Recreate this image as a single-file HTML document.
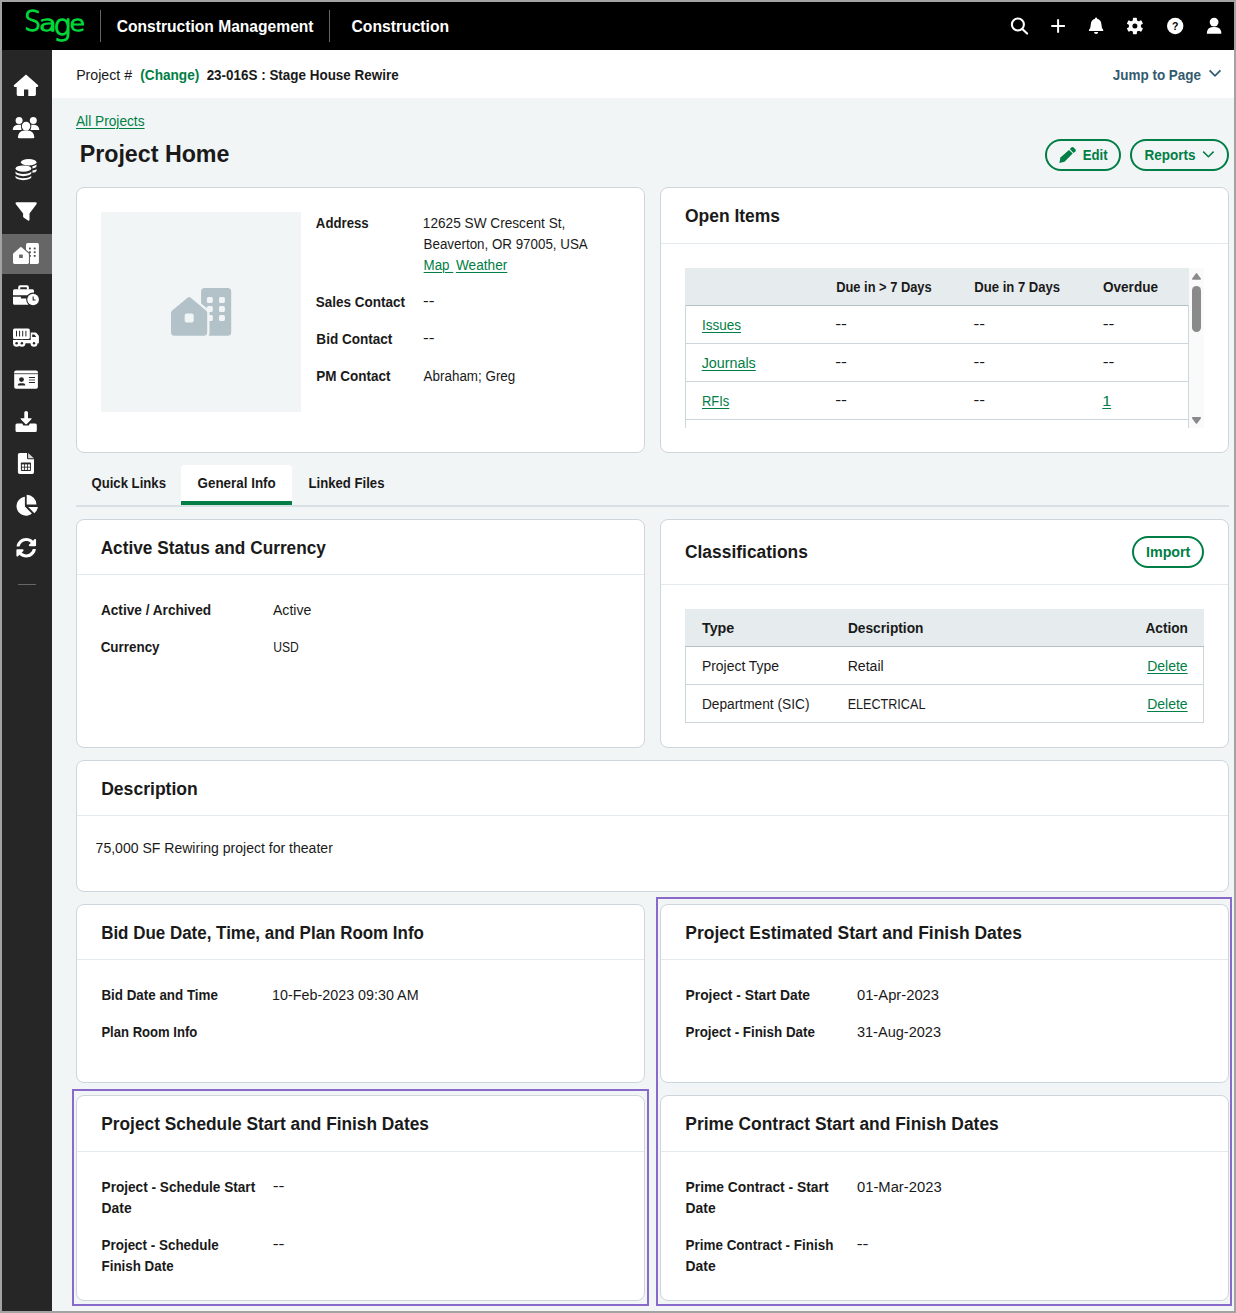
<!DOCTYPE html>
<html lang="en">
<head>
<meta charset="utf-8">
<title>Project Home</title>
<style>
*{box-sizing:border-box;margin:0;padding:0}
html,body{width:1236px;height:1313px;overflow:hidden;background:#f2f5f6}
body{font-family:"Liberation Sans",sans-serif;font-size:14px;line-height:20px;color:#1a1a1a;position:relative}
.a{position:absolute}
#hdr{left:0;top:0;width:1236px;height:50px;background:#000}
#side{left:0;top:50px;width:52px;height:1263px;background:#262626}
#sub{left:52px;top:50px;width:1184px;height:48px;background:#fff}
#frame{left:0;top:0;width:1236px;height:1313px;border:2px solid #a3a3a3;z-index:50}
.t{position:absolute;white-space:nowrap;transform-origin:0 50%;line-height:20px;height:20px}
.r{transform-origin:100% 50%}
.b{font-weight:700}
.g{color:#007e45}
.s{color:#335b70}
.u{text-decoration:underline;text-underline-offset:2px;text-decoration-thickness:1px}
.h1{font-size:23px;font-weight:700}
.h2{font-size:18px;font-weight:700}
.hd{font-size:16px;font-weight:700;color:#fff}
.card{position:absolute;background:#fff;border:1px solid #ccd6db;border-radius:8px}
.hr{position:absolute;height:1px;background:#e3e9ec}
.th{position:absolute;background:#e6ebed}
.ln{position:absolute;background:#ccd6db}
.pill{position:absolute;border:2px solid #007e45;border-radius:16px;height:32px}
.pur{position:absolute;border:2px solid #8969ca}
svg{position:absolute;display:block;overflow:visible}
</style>
</head>
<body>
<div id="hdr" class="a"></div>
<div id="side" class="a"></div>
<div id="sub" class="a"></div>
<div class="a" style="left:100px;top:10px;width:1px;height:32px;background:#666"></div>
<div class="a" style="left:329px;top:10px;width:1px;height:32px;background:#666"></div>
<div class="a" style="left:0;top:234px;width:52px;height:40px;background:#666"></div>
<div class="a" style="left:18px;top:584px;width:18px;height:1px;background:#666"></div>
<svg style="left:0;top:0" width="100" height="50" viewBox="0 0 100 50"><title>Sage</title><text font-family="DejaVu Sans Light, DejaVu Sans" font-weight="200" fill="#00d639" stroke="#00d639" stroke-width="1.4" stroke-linejoin="round"><tspan x="24.20" y="31.05" font-size="27.61" textLength="16.67" lengthAdjust="spacingAndGlyphs">S</tspan><tspan x="39.10" y="31.30" font-size="21.28" textLength="17.67" lengthAdjust="spacingAndGlyphs">a</tspan><tspan x="53.55" y="35.35" font-size="28.47" textLength="17.57" lengthAdjust="spacingAndGlyphs">g</tspan><tspan x="69.55" y="31.30" font-size="21.28" textLength="15.64" lengthAdjust="spacingAndGlyphs">e</tspan></text></svg>
<svg style="left:0;top:50px" width="52" height="560" viewBox="0 50 52 560" fill="#fff">
<!-- home -->
<path d="M26 74.4 L38.2 85.2 Q38.6 86.6 37 87 H35.9 V94.6 Q35.9 96 34.5 96 H28.3 V89.6 H24 V96 H18.1 Q16.7 96 16.7 94.6 V87 H15 Q13.4 86.6 13.8 85.2 Z"/>
<!-- users -->
<circle cx="19.1" cy="120.4" r="3.5"/><circle cx="33.3" cy="120.4" r="3.5"/>
<path d="M12.7 130 Q13 125 18 124.8 H21.5 L21.5 130 Z"/><path d="M39.3 130 Q39 125 34 124.8 H30.5 L30.5 130 Z"/>
<circle cx="26.1" cy="126.1" r="5.3" fill="#262626"/><circle cx="26.1" cy="126.1" r="4.3"/>
<path d="M17.9 137 Q18.5 130.8 24.5 130.6 H27.7 Q33.7 130.8 34.3 137 Q34.3 138.3 33 138.3 H19.2 Q17.9 138.3 17.9 137 Z"/>
<!-- coins -->
<ellipse cx="28.7" cy="162.3" rx="7.8" ry="3.2"/>
<path d="M32.4 166.2 Q35.5 165.8 36.5 164.6 V166.6 Q36 168 32.4 168.4 Z"/>
<path d="M32.4 170.6 Q35.5 170.2 36.5 169 V171 Q36 172.4 32.4 172.8 Z"/>
<ellipse cx="23.4" cy="168.6" rx="7.9" ry="3.2"/>
<path d="M15.5 171.6 Q17 174 23.4 174 Q29.8 174 31.3 171.6 V173.6 Q30 176 23.4 176.2 Q16.800 176 15.5 173.6 Z"/>
<path d="M15.5 175.8 Q17 178.200 23.4 178.200 Q29.8 178.200 31.3 175.8 V177.600 Q30 180 23.4 180.2 Q16.800 180 15.5 177.600 Z"/>
<!-- filter -->
<path d="M16.6 202.3 H35.700 Q37.400 202.500 36.600 204 L29.5 213.400 V219.700 Q29.300 221.100 28 220.500 L23.600 217.600 Q23.100 217.200 23.100 216.500 V213.400 L15.700 204 Q14.900 202.500 16.600 202.300 Z"/>
<!-- building/house (active) -->
<rect x="26" y="243.1" width="12.9" height="20.800" rx="1.6"/>
<g fill="#484848"><rect x="29" y="247.600" width="1.800" height="1.800"/><rect x="33.800" y="247.600" width="1.800" height="1.800"/><rect x="29" y="251.300" width="1.800" height="1.800"/><rect x="33.800" y="251.300" width="1.800" height="1.800"/><rect x="29" y="255" width="1.800" height="1.800"/><rect x="33.800" y="255" width="1.800" height="1.800"/></g>
<path d="M20.900 245.600 L30 253 V264.900 H13 V253 Z" fill="#666"/>
<path d="M20.900 246.800 L28.400 253.200 Q28.900 253.700 28.900 254.400 V262.500 Q28.900 263.900 27.500 263.900 H14.400 Q13 263.900 13 262.500 V254.400 Q13 253.700 13.500 253.200 Z"/>
<rect x="19.100" y="254.400" width="3.700" height="3.500" rx=".5" fill="#666"/>
<!-- briefcase clock -->
<path d="M18.200 289.500 V287.200 Q18.200 285.200 20.200 285.200 H26.900 Q28.900 285.200 28.900 287.200 V289.500 H26.900 V287.800 Q26.900 287.300 26.400 287.300 H20.700 Q20.200 287.300 20.200 287.800 V289.500 Z"/>
<path d="M14.500 289.200 H32.500 Q34 289.200 34 290.700 V295.300 H13 V290.700 Q13 289.200 14.500 289.200 Z"/>
<path d="M13 296.800 H20.900 V298.600 H27 V296.800 H30 V304.700 H14.500 Q13 304.700 13 303.200 Z"/>
<circle cx="33.100" cy="299.500" r="6.900" fill="#262626"/><circle cx="33.100" cy="299.500" r="5.800"/>
<path d="M32.600 296.500 H33.700 V299.500 H35.600 V300.600 H32.600 Z" fill="#262626"/>
<!-- truck -->
<rect x="13" y="328.400" width="16.800" height="10.600" rx="1.600"/>
<g fill="#262626"><rect x="16" y="330.800" width="1" height="5.600"/><rect x="19.100" y="330.800" width="1" height="5.600"/><rect x="22.200" y="330.800" width="1" height="5.600"/><rect x="25.400" y="330.800" width="1" height="5.600"/></g>
<path d="M13 340 H30.700 V332.600 H35.300 Q36 332.600 36.500 333.100 L38.400 335.200 Q38.900 335.700 38.900 336.400 V343.300 H13 Z"/>
<path d="M32.200 334.400 H34.300 L36.300 336.900 H32.200 Z" fill="#262626"/>
<circle cx="16.600" cy="343.200" r="3.500"/><circle cx="21.900" cy="343.200" r="3.500"/><circle cx="34" cy="343.200" r="3.500"/>
<g fill="#262626"><circle cx="16.600" cy="343.200" r="1.200"/><circle cx="21.900" cy="343.200" r="1.200"/><circle cx="34" cy="343.200" r="1.200"/></g>
<!-- id card -->
<rect x="14.200" y="370.400" width="23.700" height="18.300" rx="1.800"/>
<g fill="#262626"><rect x="14.200" y="373.200" width="23.700" height="1" fill="#555"/><circle cx="21.500" cy="379.600" r="2.400"/><path d="M17.600 385.500 Q17.800 383.200 20 383.200 H23 Q25.200 383.200 25.400 385.500 Z"/><rect x="28.900" y="377" width="6.100" height="1"/><rect x="28.900" y="379.500" width="6.100" height="1" fill="#555"/><rect x="28.900" y="382" width="6.100" height="1"/></g>
<!-- inbox in -->
<path d="M24.300 412.600 Q24.300 411.100 26.100 411.100 Q28 411.100 28 412.600 V418.200 H31 Q32.200 418.300 31.400 419.300 L26.800 424 Q26.100 424.600 25.400 424 L20.800 419.300 Q20 418.300 21.200 418.200 H24.300 Z"/>
<path d="M17 423.600 H22.200 L23.400 425.600 H28.700 L29.900 423.600 H35.300 Q36.800 423.600 36.800 425.100 V430.400 Q36.800 431.900 35.300 431.900 H17 Q15.500 431.900 15.500 430.400 V425.100 Q15.500 423.600 17 423.600 Z"/>
<!-- file spreadsheet -->
<path d="M19.700 452.900 H27 V458 Q27 459.300 28.300 459.300 H34 V472.300 Q34 474 32.300 474 H19.700 Q17.900 474 17.900 472.300 V454.600 Q17.900 452.900 19.700 452.900 Z"/>
<path d="M28.100 453 L33.900 458.300 H28.100 Z" fill="#d9d9d9"/>
<rect x="20.900" y="462.400" width="10.100" height="8.500" rx=".8" fill="#262626"/>
<g><rect x="21.900" y="464.400" width="2.200" height="2.300"/><rect x="24.900" y="464.400" width="2.200" height="2.300"/><rect x="27.900" y="464.400" width="2.200" height="2.300"/><rect x="21.900" y="467.600" width="2.200" height="2.300"/><rect x="24.900" y="467.600" width="2.200" height="2.300"/><rect x="27.900" y="467.600" width="2.200" height="2.300"/></g>
<!-- pie -->
<path d="M24.900 496.700 V506.600 L31.900 513.600 A9.500 9.500 0 1 1 24.900 496.700 Z"/>
<path d="M26.700 494.800 A9.800 9.800 0 0 1 36.500 504.600 H26.700 Z"/>
<path d="M28.300 507 H37.900 A9.800 9.800 0 0 1 34.300 513.200 Z"/>
<!-- sync -->
<g transform="translate(16.100 537.600) scale(.0396)"><path d="M370.720 133.280C339.458 104.008 298.888 87.962 255.848 88c-77.458.068-144.328 53.178-162.791 126.850-1.344 5.363-6.122 9.150-11.651 9.150H24.103c-7.498 0-13.194-6.807-11.807-14.176C33.933 94.924 134.813 8 256 8c66.448 0 126.791 26.136 171.315 68.685L463.030 40.970C478.149 25.851 504 36.559 504 57.941V192c0 13.255-10.745 24-24 24H345.941c-21.382 0-32.090-25.851-16.971-40.971l41.750-41.749zM32 296h134.059c21.382 0 32.090 25.851 16.971 40.971l-41.750 41.750c31.262 29.273 71.835 45.319 114.876 45.280 77.418-.070 144.315-53.144 162.787-126.849 1.344-5.363 6.122-9.150 11.651-9.150h57.304c7.498 0 13.194 6.807 11.807 14.176C478.067 417.076 377.187 504 256 504c-66.448 0-126.791-26.136-171.315-68.685L48.970 471.030C33.851 486.149 8 475.441 8 454.059V320c0-13.255 10.745-24 24-24z"/></g>
</svg>


<!-- cards -->
<div class="card" style="left:76px;top:187px;width:569px;height:266px"></div>
<div class="card" style="left:660px;top:187px;width:569px;height:266px"></div>
<div class="card" style="left:76px;top:519px;width:569px;height:229px"></div>
<div class="card" style="left:660px;top:519px;width:569px;height:229px"></div>
<div class="card" style="left:76px;top:760px;width:1153px;height:132px"></div>
<div class="card" style="left:76px;top:904px;width:569px;height:179px"></div>
<div class="card" style="left:660px;top:904px;width:569px;height:179px"></div>
<div class="card" style="left:76px;top:1095px;width:569px;height:206px"></div>
<div class="card" style="left:660px;top:1095px;width:569px;height:206px"></div>
<!-- card dividers -->
<div class="hr" style="left:661px;top:243px;width:567px"></div>
<div class="hr" style="left:77px;top:574px;width:567px"></div>
<div class="hr" style="left:661px;top:584px;width:567px"></div>
<div class="hr" style="left:77px;top:815px;width:1151px"></div>
<div class="hr" style="left:77px;top:959px;width:567px"></div>
<div class="hr" style="left:661px;top:959px;width:567px"></div>
<div class="hr" style="left:77px;top:1151px;width:567px"></div>
<div class="hr" style="left:661px;top:1151px;width:567px"></div>

<!-- card 1 image placeholder -->
<div class="a" style="left:101px;top:212px;width:200px;height:200px;background:#f2f5f6"></div>

<!-- open items table -->
<div class="th" style="left:685px;top:268px;width:504px;height:37px"></div>
<div class="ln" style="left:685px;top:305px;width:504px;height:1px;background:#b3c2c9"></div>
<div class="ln" style="left:685px;top:343px;width:504px;height:1px"></div>
<div class="ln" style="left:685px;top:381px;width:504px;height:1px"></div>
<div class="ln" style="left:685px;top:419px;width:504px;height:1px"></div>
<div class="ln" style="left:685px;top:305px;width:1px;height:123px"></div>
<div class="ln" style="left:1188px;top:305px;width:1px;height:123px"></div>
<div class="a" style="left:1189px;top:268px;width:15px;height:160px;background:#fafafa"></div>
<div class="a" style="left:1192px;top:286px;width:9px;height:46px;border-radius:4.5px;background:#8a8a8a"></div>
<svg style="left:1191px;top:272px" width="11" height="9" viewBox="0 0 11 9"><path d="M5.5 1.9 L9.2 6.9 H1.8 Z" fill="#8a8a8a" stroke="#8a8a8a" stroke-width="1.6" stroke-linejoin="round"/></svg>
<svg style="left:1191px;top:416px" width="11" height="9" viewBox="0 0 11 9"><path d="M1.8 1.9 H9.2 L5.5 6.9 Z" fill="#8a8a8a" stroke="#8a8a8a" stroke-width="1.6" stroke-linejoin="round"/></svg>

<!-- tabs -->
<div class="a" style="left:76px;top:505px;width:1153px;height:2px;background:#d9e0e3"></div>
<div class="a" style="left:181px;top:465px;width:111px;height:40px;background:#fff;border-radius:4px 4px 0 0"></div>
<div class="a" style="left:181px;top:501px;width:111px;height:4px;background:#007e45"></div>

<!-- classifications table -->
<div class="th" style="left:685px;top:609px;width:519px;height:37px"></div>
<div class="ln" style="left:685px;top:646px;width:519px;height:1px;background:#b3c2c9"></div>
<div class="ln" style="left:685px;top:684px;width:519px;height:1px"></div>
<div class="ln" style="left:685px;top:722px;width:519px;height:1px"></div>
<div class="ln" style="left:685px;top:647px;width:1px;height:75px"></div>
<div class="ln" style="left:1203px;top:647px;width:1px;height:75px"></div>

<!-- pills -->
<div class="pill" style="left:1045px;top:139px;width:76px"></div>
<div class="pill" style="left:1130px;top:139px;width:99px"></div>
<div class="pill" style="left:1132px;top:536px;width:72px"></div>

<!-- purple highlights -->
<div class="pur" style="left:656px;top:897px;width:576px;height:409px"></div>
<div class="pur" style="left:72px;top:1089px;width:577px;height:217px"></div>

<svg style="left:0;top:0" width="1236" height="480" viewBox="0 0 1236 480">
<!-- header icons -->
<g fill="none" stroke="#fff" stroke-width="2.100"><circle cx="1017.900" cy="24.500" r="6"/><path d="M1022.300 28.900 L1027.100 33.600" stroke-linecap="round"/></g>
<path d="M1051.300 26 H1064.900 M1058.100 19.200 V32.800" stroke="#fff" stroke-width="2" fill="none"/>
<g fill="#fff">
<path d="M1096.100 17.400 Q1097.200 17.400 1097.200 18.700 Q1101.200 19.800 1101.400 24.300 Q1101.500 28.200 1103.200 29.800 Q1103.800 30.900 1102.600 31.100 H1089.600 Q1088.400 30.900 1089 29.800 Q1090.700 28.200 1090.800 24.300 Q1091 19.800 1095 18.700 Q1095 17.400 1096.100 17.400 Z"/>
<path d="M1094 32 H1098.200 Q1098 34 1096.100 34 Q1094.200 34 1094 32 Z"/>
<!-- gear -->
<g transform="translate(1134.900 26)">
<circle r="6.100"/>
<g id="teeth"><rect x="-2" y="-8.300" width="4" height="16.600" rx=".800"/><rect x="-2" y="-8.300" width="4" height="16.600" rx=".800" transform="rotate(60)"/><rect x="-2" y="-8.300" width="4" height="16.600" rx=".800" transform="rotate(120)"/></g>
<circle r="2.500" fill="#000"/>
</g>
<!-- help -->
<circle cx="1175.200" cy="26" r="8.200"/>
<!-- user -->
<circle cx="1214.100" cy="22.100" r="4.400"/>
<path d="M1206.800 33.800 Q1206.800 27.100 1213 26.900 H1215.200 Q1221.400 27.100 1221.400 33.800 Z"/>
</g>
<!-- chevrons -->
<path d="M1209.600 70.400 L1215 75.800 L1220.400 70.400" fill="none" stroke="#335b70" stroke-width="1.800"/>
<path d="M1203.200 151.600 L1208.400 156.800 L1213.600 151.600" fill="none" stroke="#007e45" stroke-width="1.500"/>
<!-- pencil -->
<g fill="#007e45"><path d="M1059.400 162.900 L1060.400 157.600 L1069 149.900 L1072.700 153.600 L1064.500 161.800 Z"/><path d="M1069.800 149.100 L1071.700 147.200 Q1072.500 146.600 1073.300 147.300 L1075.600 149.600 Q1076.200 150.400 1075.500 151.200 L1073.500 153 Z"/></g>
<!-- placeholder building icon -->
<g fill="#b3c2c9">
<rect x="201.100" y="288.100" width="30.100" height="47.700" rx="3.600"/>
<g fill="#f2f5f6"><rect x="206.900" y="297" width="5.900" height="5.900" rx="1.500"/><rect x="219" y="297" width="5.900" height="5.900" rx="1.500"/><rect x="206.900" y="306" width="5.900" height="5.900" rx="1.500"/><rect x="219" y="306" width="5.900" height="5.900" rx="1.500"/><rect x="206.900" y="315" width="5.900" height="5.900" rx="1.500"/><rect x="219" y="315" width="5.900" height="5.900" rx="1.500"/></g>
<path d="M187.200 297.900 Q189.100 296.300 191 297.900 L206 310.400 Q207.200 311.400 207.200 313 V332.300 Q207.200 335.800 203.700 335.800 H174.500 Q171 335.800 171 332.300 V313 Q171 311.400 172.200 310.400 Z" stroke="#f2f5f6" stroke-width="4.600" paint-order="stroke"/>
<rect x="184.700" y="313.500" width="9" height="9.100" rx="2" fill="#f2f5f6"/>
</g>
</svg>
<div class="t" style="left:1171.700px;top:16px;font-size:10.5px;font-weight:700;color:#000;width:7px;text-align:center">?</div>

<div class="t hd" style="left:116px;top:17px;transform:translateX(0.75px) scaleX(0.9752)">Construction Management</div>
<div class="t hd" style="left:351px;top:17px;transform:translateX(0.45px) scaleX(0.9812)">Construction</div>
<div class="t" style="left:76px;top:65px;transform:translateX(0.15px) scaleX(1.0125)">Project #</div>
<div class="t b g" style="left:140px;top:65px;transform:translateX(0.30px) scaleX(0.9717)">(Change)</div>
<div class="t b" style="left:206px;top:65px;transform:translateX(0.65px) scaleX(0.9599)">23-016S : Stage House Rewire</div>
<div class="t b s" style="left:1112px;top:65px;transform:translateX(0.70px) scaleX(0.9629)">Jump to Page</div>
<div class="t g u" style="left:75px;top:111px;transform:translateX(0.95px) scaleX(0.9794)">All Projects</div>
<div class="t h1" style="left:79px;top:144px;transform:translateX(0.65px) scaleX(1.0104)">Project Home</div>
<div class="t b g" style="left:1082px;top:145px;transform:translateX(0.70px) scaleX(0.9424)">Edit</div>
<div class="t b g" style="left:1144px;top:145px;transform:translateX(0.55px) scaleX(0.9642)">Reports</div>
<div class="t b" style="left:315px;top:213px;transform:translateX(0.85px) scaleX(0.9436)">Address</div>
<div class="t" style="left:422px;top:213px;transform:translateX(0.85px) scaleX(0.9738)">12625 SW Crescent St,</div>
<div class="t" style="left:423px;top:234px;transform:translateX(0.60px) scaleX(0.9542)">Beaverton, OR 97005, USA</div>
<div class="t g u" style="left:423px;top:255px;transform:translateX(0.60px) scaleX(0.9524)">Map&nbsp;</div>
<div class="t g u" style="left:455px;top:255px;transform:translateX(0.95px) scaleX(0.9748)">Weather</div>
<div class="t b" style="left:315px;top:292px;transform:translateX(0.85px) scaleX(0.9629)">Sales Contact</div>
<div class="t" style="left:423px;top:291px;transform:translateX(0.10px) scaleX(1.2337)">--</div>
<div class="t b" style="left:316px;top:329px;transform:translateX(0.35px) scaleX(0.9674)">Bid Contact</div>
<div class="t" style="left:423px;top:328px;transform:translateX(0.10px) scaleX(1.2337)">--</div>
<div class="t b" style="left:316px;top:366px;transform:translateX(0.35px) scaleX(0.9634)">PM Contact</div>
<div class="t" style="left:423px;top:366px;transform:translateX(0.60px) scaleX(0.9578)">Abraham; Greg</div>
<div class="t h2" style="left:684px;top:206px;transform:translateX(0.95px) scaleX(0.9695)">Open Items</div>
<div class="t b" style="left:836px;top:277px;transform:translateX(0.20px) scaleX(0.9192)">Due in &gt; 7 Days</div>
<div class="t b" style="left:974px;top:277px;transform:translateX(0.35px) scaleX(0.9334)">Due in 7 Days</div>
<div class="t b" style="left:1103px;top:277px;transform:translateX(0.00px) scaleX(0.9682)">Overdue</div>
<div class="t g u" style="left:701px;top:315px;transform:translateX(0.95px) scaleX(0.9648)">Issues</div>
<div class="t" style="left:835px;top:314px;transform:translateX(0.20px) scaleX(1.2654)">--</div>
<div class="t" style="left:973px;top:314px;transform:translateX(0.60px) scaleX(1.2337)">--</div>
<div class="t" style="left:1102px;top:314px;transform:translateX(0.75px) scaleX(1.2557)">--</div>
<div class="t g u" style="left:701px;top:353px;transform:translateX(0.70px) scaleX(1.0219)">Journals</div>
<div class="t" style="left:835px;top:352px;transform:translateX(0.20px) scaleX(1.2654)">--</div>
<div class="t" style="left:973px;top:352px;transform:translateX(0.60px) scaleX(1.2337)">--</div>
<div class="t" style="left:1102px;top:352px;transform:translateX(0.75px) scaleX(1.2557)">--</div>
<div class="t g u" style="left:701px;top:391px;transform:translateX(0.95px) scaleX(0.9234)">RFIs</div>
<div class="t" style="left:835px;top:390px;transform:translateX(0.20px) scaleX(1.2654)">--</div>
<div class="t" style="left:973px;top:390px;transform:translateX(0.60px) scaleX(1.2337)">--</div>
<div class="t g u" style="left:1102px;top:391px;transform:translateX(0.25px) scaleX(1.1422)">1</div>
<div class="t b" style="left:91px;top:473px;transform:translateX(0.45px) scaleX(0.9386)">Quick Links</div>
<div class="t b" style="left:197px;top:473px;transform:translateX(0.50px) scaleX(0.9582)">General Info</div>
<div class="t b" style="left:308px;top:473px;transform:translateX(0.50px) scaleX(0.9385)">Linked Files</div>
<div class="t h2" style="left:100px;top:538px;transform:translateX(0.65px) scaleX(0.9583)">Active Status and Currency</div>
<div class="t b" style="left:100px;top:600px;transform:translateX(0.90px) scaleX(0.9745)">Active / Archived</div>
<div class="t" style="left:272px;top:600px;transform:translateX(0.95px) scaleX(1.0062)">Active</div>
<div class="t b" style="left:100px;top:637px;transform:translateX(0.65px) scaleX(0.9585)">Currency</div>
<div class="t" style="left:273px;top:637px;transform:translateX(0.20px) scaleX(0.8650)">USD</div>
<div class="t h2" style="left:684px;top:542px;transform:translateX(0.95px) scaleX(0.9672)">Classifications</div>
<div class="t b g" style="left:1146px;top:542px;transform:translateX(0.00px) scaleX(1.0185)">Import</div>
<div class="t b" style="left:701px;top:618px;transform:translateX(0.95px) scaleX(1.0218)">Type</div>
<div class="t b" style="left:847px;top:618px;transform:translateX(0.90px) scaleX(0.9806)">Description</div>
<div class="t b" style="left:1145px;top:618px;transform:translateX(0.50px) scaleX(0.9747)">Action</div>
<div class="t" style="left:701px;top:656px;transform:translateX(0.95px) scaleX(0.9938)">Project Type</div>
<div class="t" style="left:847px;top:656px;transform:translateX(0.65px) scaleX(1.0070)">Retail</div>
<div class="t g u" style="left:1147px;top:656px;transform:translateX(0.15px) scaleX(1.0011)">Delete</div>
<div class="t" style="left:701px;top:694px;transform:translateX(0.95px) scaleX(0.9802)">Department (SIC)</div>
<div class="t" style="left:847px;top:694px;transform:translateX(0.65px) scaleX(0.9002)">ELECTRICAL</div>
<div class="t g u" style="left:1147px;top:694px;transform:translateX(0.15px) scaleX(1.0011)">Delete</div>
<div class="t h2" style="left:101px;top:779px;transform:translateX(0.15px) scaleX(0.9762)">Description</div>
<div class="t" style="left:95px;top:838px;transform:translateX(0.60px) scaleX(1.0027)">75,000 SF Rewiring project for theater</div>
<div class="t h2" style="left:101px;top:923px;transform:translateX(0.15px) scaleX(0.9419)">Bid Due Date, Time, and Plan Room Info</div>
<div class="t b" style="left:101px;top:985px;transform:translateX(0.40px) scaleX(0.9559)">Bid Date and Time</div>
<div class="t" style="left:272px;top:985px;transform:translateX(0.10px) scaleX(1.0228)">10-Feb-2023 09:30 AM</div>
<div class="t b" style="left:101px;top:1022px;transform:translateX(0.40px) scaleX(0.9339)">Plan Room Info</div>
<div class="t h2" style="left:685px;top:923px;transform:translateX(0.30px) scaleX(0.9699)">Project Estimated Start and Finish Dates</div>
<div class="t b" style="left:685px;top:985px;transform:translateX(0.55px) scaleX(0.9876)">Project - Start Date</div>
<div class="t" style="left:856px;top:985px;transform:translateX(0.95px) scaleX(1.0543)">01-Apr-2023</div>
<div class="t b" style="left:685px;top:1022px;transform:translateX(0.55px) scaleX(0.9558)">Project - Finish Date</div>
<div class="t" style="left:856px;top:1022px;transform:translateX(0.95px) scaleX(1.0384)">31-Aug-2023</div>
<div class="t h2" style="left:101px;top:1114px;transform:translateX(0.30px) scaleX(0.9606)">Project Schedule Start and Finish Dates</div>
<div class="t b" style="left:101px;top:1177px;transform:translateX(0.55px) scaleX(0.9729)">Project - Schedule Start</div>
<div class="t b" style="left:101px;top:1198px;transform:translateX(0.55px) scaleX(0.9924)">Date</div>
<div class="t" style="left:272px;top:1176px;transform:translateX(0.70px) scaleX(1.2654)">--</div>
<div class="t b" style="left:101px;top:1235px;transform:translateX(0.55px) scaleX(0.9588)">Project - Schedule</div>
<div class="t b" style="left:101px;top:1256px;transform:translateX(0.55px) scaleX(0.9545)">Finish Date</div>
<div class="t" style="left:272px;top:1234px;transform:translateX(0.70px) scaleX(1.2654)">--</div>
<div class="t h2" style="left:685px;top:1114px;transform:translateX(0.30px) scaleX(0.9672)">Prime Contract Start and Finish Dates</div>
<div class="t b" style="left:685px;top:1177px;transform:translateX(0.55px) scaleX(0.9878)">Prime Contract - Start</div>
<div class="t b" style="left:685px;top:1198px;transform:translateX(0.55px) scaleX(0.9924)">Date</div>
<div class="t" style="left:856px;top:1177px;transform:translateX(0.95px) scaleX(1.0562)">01-Mar-2023</div>
<div class="t b" style="left:685px;top:1235px;transform:translateX(0.55px) scaleX(0.9598)">Prime Contract - Finish</div>
<div class="t b" style="left:685px;top:1256px;transform:translateX(0.55px) scaleX(0.9924)">Date</div>
<div class="t" style="left:856px;top:1234px;transform:translateX(0.70px) scaleX(1.2654)">--</div>
<div id="frame" class="a"></div>

</body>
</html>
